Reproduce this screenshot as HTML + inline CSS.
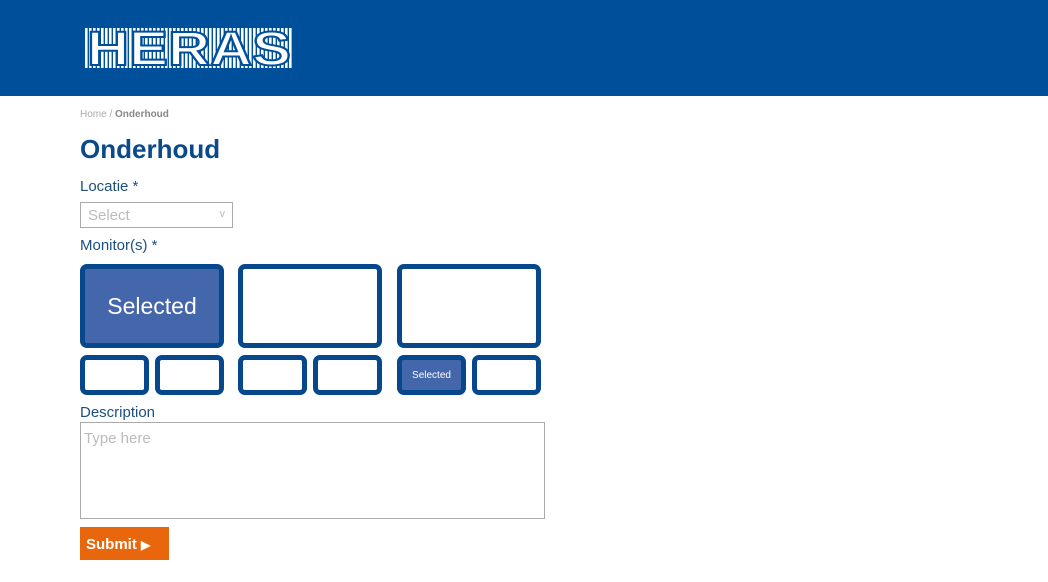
<!DOCTYPE html>
<html><head><meta charset="utf-8"><style>
body{margin:0;width:1048px;height:582px;background:#fff;font-family:"Liberation Sans",sans-serif;position:relative;overflow:hidden}
.hdr{position:absolute;left:0;top:0;width:1048px;height:96px;background:#004f9a}
.a{position:absolute}
.lbl{position:absolute;left:80px;color:#1c4f80;font-size:15px}
.m{position:absolute;box-sizing:border-box;border:5px solid #07488c;border-radius:7px;background:#fff;color:#fff;display:flex;align-items:center;justify-content:center}
.s{background:#4466aa}
</style></head><body>
<div class="hdr"></div>
<svg class="a" style="left:85px;top:27px" width="210" height="42">
<defs><pattern id="p" width="4" height="42" patternUnits="userSpaceOnUse"><rect width="4" height="42" fill="#004f9a"/><rect width="2.6" height="42" fill="#fff"/></pattern></defs>
<rect x="0" y="1" width="208" height="40" fill="url(#p)"/>
<text x="2" y="38" font-family="Liberation Sans" font-weight="bold" font-size="48" textLength="204" lengthAdjust="spacingAndGlyphs" fill="#fff" stroke="#004f9a" stroke-width="2">HERAS</text>
</svg>
<div class="a" style="left:80px;top:109px;font-size:10px;color:#aaa">Home / <b style="color:#888">Onderhoud</b></div>
<div class="a" style="left:80px;top:134px;font-size:26px;font-weight:bold;color:#0b4a8a">Onderhoud</div>
<div class="lbl" style="top:178px">Locatie *</div>
<div class="a" style="left:80px;top:202px;width:151px;height:24px;border:1px solid #aaa;color:#bbb;font-size:15px;line-height:26px;text-indent:7px">Select<span style="position:absolute;right:7px;top:-2px;font-size:11px">v</span></div>
<div class="lbl" style="top:237px">Monitor(s) *</div>
<div class="m s" style="left:80px;top:264px;width:144px;height:84px;font-size:23px">Selected</div>
<div class="m" style="left:238px;top:264px;width:144px;height:84px"></div>
<div class="m" style="left:397px;top:264px;width:144px;height:84px"></div>
<div class="m" style="left:80px;top:355px;width:69px;height:40px"></div>
<div class="m" style="left:155px;top:355px;width:69px;height:40px"></div>
<div class="m" style="left:238px;top:355px;width:69px;height:40px"></div>
<div class="m" style="left:313px;top:355px;width:69px;height:40px"></div>
<div class="m s" style="left:397px;top:355px;width:69px;height:40px;font-size:10px">Selected</div>
<div class="m" style="left:472px;top:355px;width:69px;height:40px"></div>
<div class="lbl" style="top:404px">Description</div>
<div class="a" style="left:80px;top:422px;width:463px;height:95px;border:1px solid #aaa"></div>
<div class="a" style="left:84px;top:430px;color:#bbb;font-size:15px">Type here</div>
<div class="a" style="left:80px;top:527px;width:89px;height:33px;background:#e8670c;color:#fff;font-weight:bold;font-size:15px;line-height:35px;text-indent:6px">Submit <span style="font-size:12px">&#9654;</span></div>
</body></html>
